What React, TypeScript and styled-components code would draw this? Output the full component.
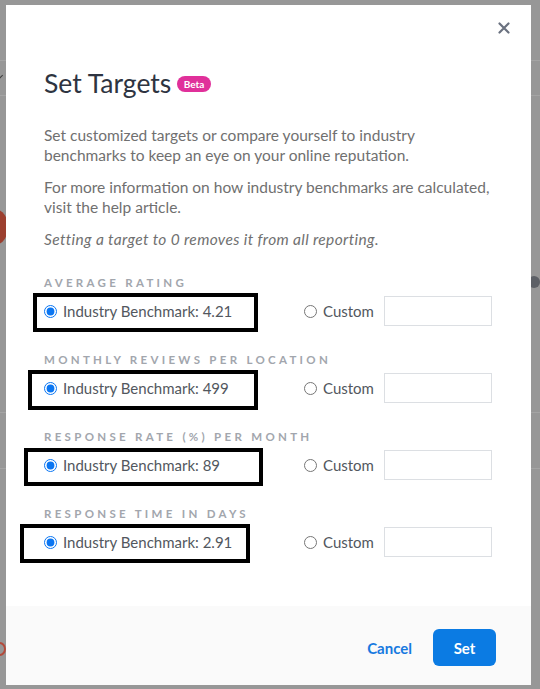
import { useState } from "react";
import styled, { createGlobalStyle } from "styled-components";

const GlobalStyle = createGlobalStyle`
  html, body {
    margin: 0;
    padding: 0;
    width: 540px;
    height: 689px;
    overflow: hidden;
    font-family: Lato, "Open Sans", Arial, sans-serif;
  }
  * { box-sizing: border-box; }
`;

type Metric = {
  id: string;
  label: string;
  benchmark: string;
  box: { left: number; top: number; width: number; height: number };
};

const METRICS: Metric[] = [
  { id: "rating", label: "Average Rating", benchmark: "4.21", box: { left: -11, top: -3, width: 225, height: 39 } },
  { id: "reviews", label: "Monthly Reviews per Location", benchmark: "499", box: { left: -16, top: -3, width: 230, height: 40 } },
  { id: "rate", label: "Response Rate (%) per Month", benchmark: "89", box: { left: -20, top: -2, width: 239, height: 38 } },
  { id: "time", label: "Response Time in Days", benchmark: "2.91", box: { left: -24, top: -3, width: 230, height: 39 } },
];

function CloseIcon() {
  return (
    <svg width="12" height="12" viewBox="0 0 12 12">
      <path d="M1.5 1.5l9 9M10.5 1.5l-9 9" stroke="#6b7280" strokeWidth="2.2" strokeLinecap="round" />
    </svg>
  );
}

function App() {
  const [choice, setChoice] = useState<Record<string, string>>({
    rating: "benchmark",
    reviews: "benchmark",
    rate: "benchmark",
    time: "benchmark",
  });

  const pick = (id: string, value: string) => setChoice({ ...choice, [id]: value });

  return (
    <>
      <GlobalStyle />
      <Overlay>
        {/* bits of the page behind the backdrop */}
        <PageLine $top={60} />
        <PageLine $top={95} />
        <PageLine $top={412} />
        <PageLine $top={468} />
        <PageChevron />
        <PageBlob />
        <PageDot />
        <PageRing />

        <Modal>
          <CloseButton aria-label="Close">
            <CloseIcon />
          </CloseButton>

          <Body>
            <TitleRow>
              <Title>Set Targets</Title>
              <Badge>Beta</Badge>
            </TitleRow>

            <Text>
              Set customized targets or compare yourself to industry benchmarks to keep an eye on your online
              reputation.
            </Text>
            <Text>For more information on how industry benchmarks are calculated, visit the help article.</Text>
            <Text $italic>Setting a target to 0 removes it from all reporting.</Text>

            <Sections>
              {METRICS.map((m) => (
                <Section key={m.id}>
                  <SectionLabel>{m.label}</SectionLabel>
                  <Row>
                    <Highlight
                      style={{ left: m.box.left, top: m.box.top, width: m.box.width, height: m.box.height }}
                    />
                    <RadioLabel>
                      <Radio
                        type="radio"
                        name={m.id}
                        checked={choice[m.id] === "benchmark"}
                        onChange={() => pick(m.id, "benchmark")}
                      />
                      Industry Benchmark: {m.benchmark}
                    </RadioLabel>
                    <RadioLabel>
                      <Radio
                        type="radio"
                        name={m.id}
                        checked={choice[m.id] === "custom"}
                        onChange={() => pick(m.id, "custom")}
                      />
                      Custom
                    </RadioLabel>
                    <TargetInput type="text" />
                  </Row>
                </Section>
              ))}
            </Sections>
          </Body>

          <Footer>
            <LinkButton>Cancel</LinkButton>
            <PrimaryButton>Set</PrimaryButton>
          </Footer>
        </Modal>
      </Overlay>
    </>
  );
}

const Overlay = styled.div`
  position: relative;
  width: 540px;
  height: 689px;
  background-color: #979797;
  padding: 5px 9px 4px 6px;
  display: flex;
`;

const PageLine = styled.div<{ $top: number }>`
  position: absolute;
  left: 0;
  top: ${(p) => p.$top}px;
  width: 540px;
  height: 1px;
  background-color: #a4a4a4;
`;

const PageChevron = styled.div`
  position: absolute;
  left: -3px;
  top: 73px;
  width: 5px;
  height: 5px;
  border-right: 1.5px solid #3a3a3a;
  border-bottom: 1.5px solid #3a3a3a;
  transform: rotate(45deg);
`;

const PageBlob = styled.div`
  position: absolute;
  left: -14px;
  top: 210px;
  width: 22px;
  height: 34px;
  border-radius: 50%;
  background-color: #9c3f2f;
`;

const PageDot = styled.div`
  position: absolute;
  left: 528px;
  top: 276px;
  width: 12px;
  height: 12px;
  border-radius: 50%;
  background-color: #5d6066;
`;

const PageRing = styled.div`
  position: absolute;
  left: -7px;
  top: 642px;
  width: 13px;
  height: 14px;
  border-radius: 50%;
  border: 2px solid #b34a3b;
`;

const Modal = styled.div`
  position: relative;
  z-index: 1;
  flex: 1;
  min-width: 0;
  display: flex;
  flex-direction: column;
  background-color: #ffffff;
`;

const CloseButton = styled.button`
  position: absolute;
  top: 17px;
  right: 21px;
  display: flex;
  padding: 0;
  border: none;
  background: none;
  cursor: pointer;
`;

const Body = styled.div`
  flex: 1;
  padding: 62px 38px 0 38px;
`;

const TitleRow = styled.div`
  display: flex;
  align-items: center;
  gap: 6px;
  margin-bottom: 26px;
`;

const Title = styled.h1`
  margin: 0;
  font-size: 26.5px;
  line-height: 32px;
  font-weight: 400;
  color: #2e3441;
`;

const Badge = styled.span`
  display: inline-flex;
  align-items: center;
  height: 16px;
  padding: 0 6.5px;
  border-radius: 8px;
  background-color: #e0309a;
  color: #ffffff;
  font-size: 10px;
  font-weight: 700;
  margin-top: 2px;
`;

const Text = styled.p<{ $italic?: boolean }>`
  margin: 0 0 12px 0;
  font-size: 15.5px;
  line-height: 20px;
  color: #707070;
  font-style: ${(p) => (p.$italic ? "italic" : "normal")};
  letter-spacing: ${(p) => (p.$italic ? "0.35px" : "normal")};
`;

const Sections = styled.div`
  display: flex;
  flex-direction: column;
  gap: 26px;
  margin-top: 26px;
`;

const Section = styled.div`
  display: flex;
  flex-direction: column;
  gap: 5px;
`;

const SectionLabel = styled.div`
  font-size: 11.5px;
  line-height: 16px;
  font-weight: 700;
  letter-spacing: 3.3px;
  text-transform: uppercase;
  color: #a2a6ad;
`;

const Row = styled.div`
  position: relative;
  display: grid;
  grid-template-columns: 260px 80px 108px;
  align-items: center;
  height: 30px;
`;

const Highlight = styled.div`
  position: absolute;
  border: 4px solid #000000;
  pointer-events: none;
`;

const RadioLabel = styled.label`
  display: flex;
  align-items: center;
  gap: 6px;
  font-size: 15px;
  color: #52575e;
  white-space: nowrap;
  cursor: pointer;
`;

const Radio = styled.input`
  width: 13px;
  height: 13px;
  margin: 0;
  accent-color: #0b76f2;
`;

const TargetInput = styled.input`
  width: 108px;
  height: 30px;
  border: 1px solid #dcdfe3;
  border-radius: 0;
  padding: 0 8px;
  font-family: inherit;
  font-size: 14px;
  outline: none;
`;

const Footer = styled.div`
  height: 79px;
  display: flex;
  align-items: center;
  justify-content: flex-end;
  gap: 21px;
  padding: 4px 35px 0 0;
  background-color: #fafafa;
`;

const LinkButton = styled.button`
  border: none;
  background: none;
  padding: 0;
  font-family: inherit;
  font-size: 15px;
  font-weight: 700;
  color: #1779e0;
  cursor: pointer;
`;

const PrimaryButton = styled.button`
  width: 63px;
  height: 37px;
  border: none;
  border-radius: 6px;
  background-color: #0b7be3;
  color: #ffffff;
  font-family: inherit;
  font-size: 15px;
  font-weight: 700;
  cursor: pointer;
`;

export default App;
